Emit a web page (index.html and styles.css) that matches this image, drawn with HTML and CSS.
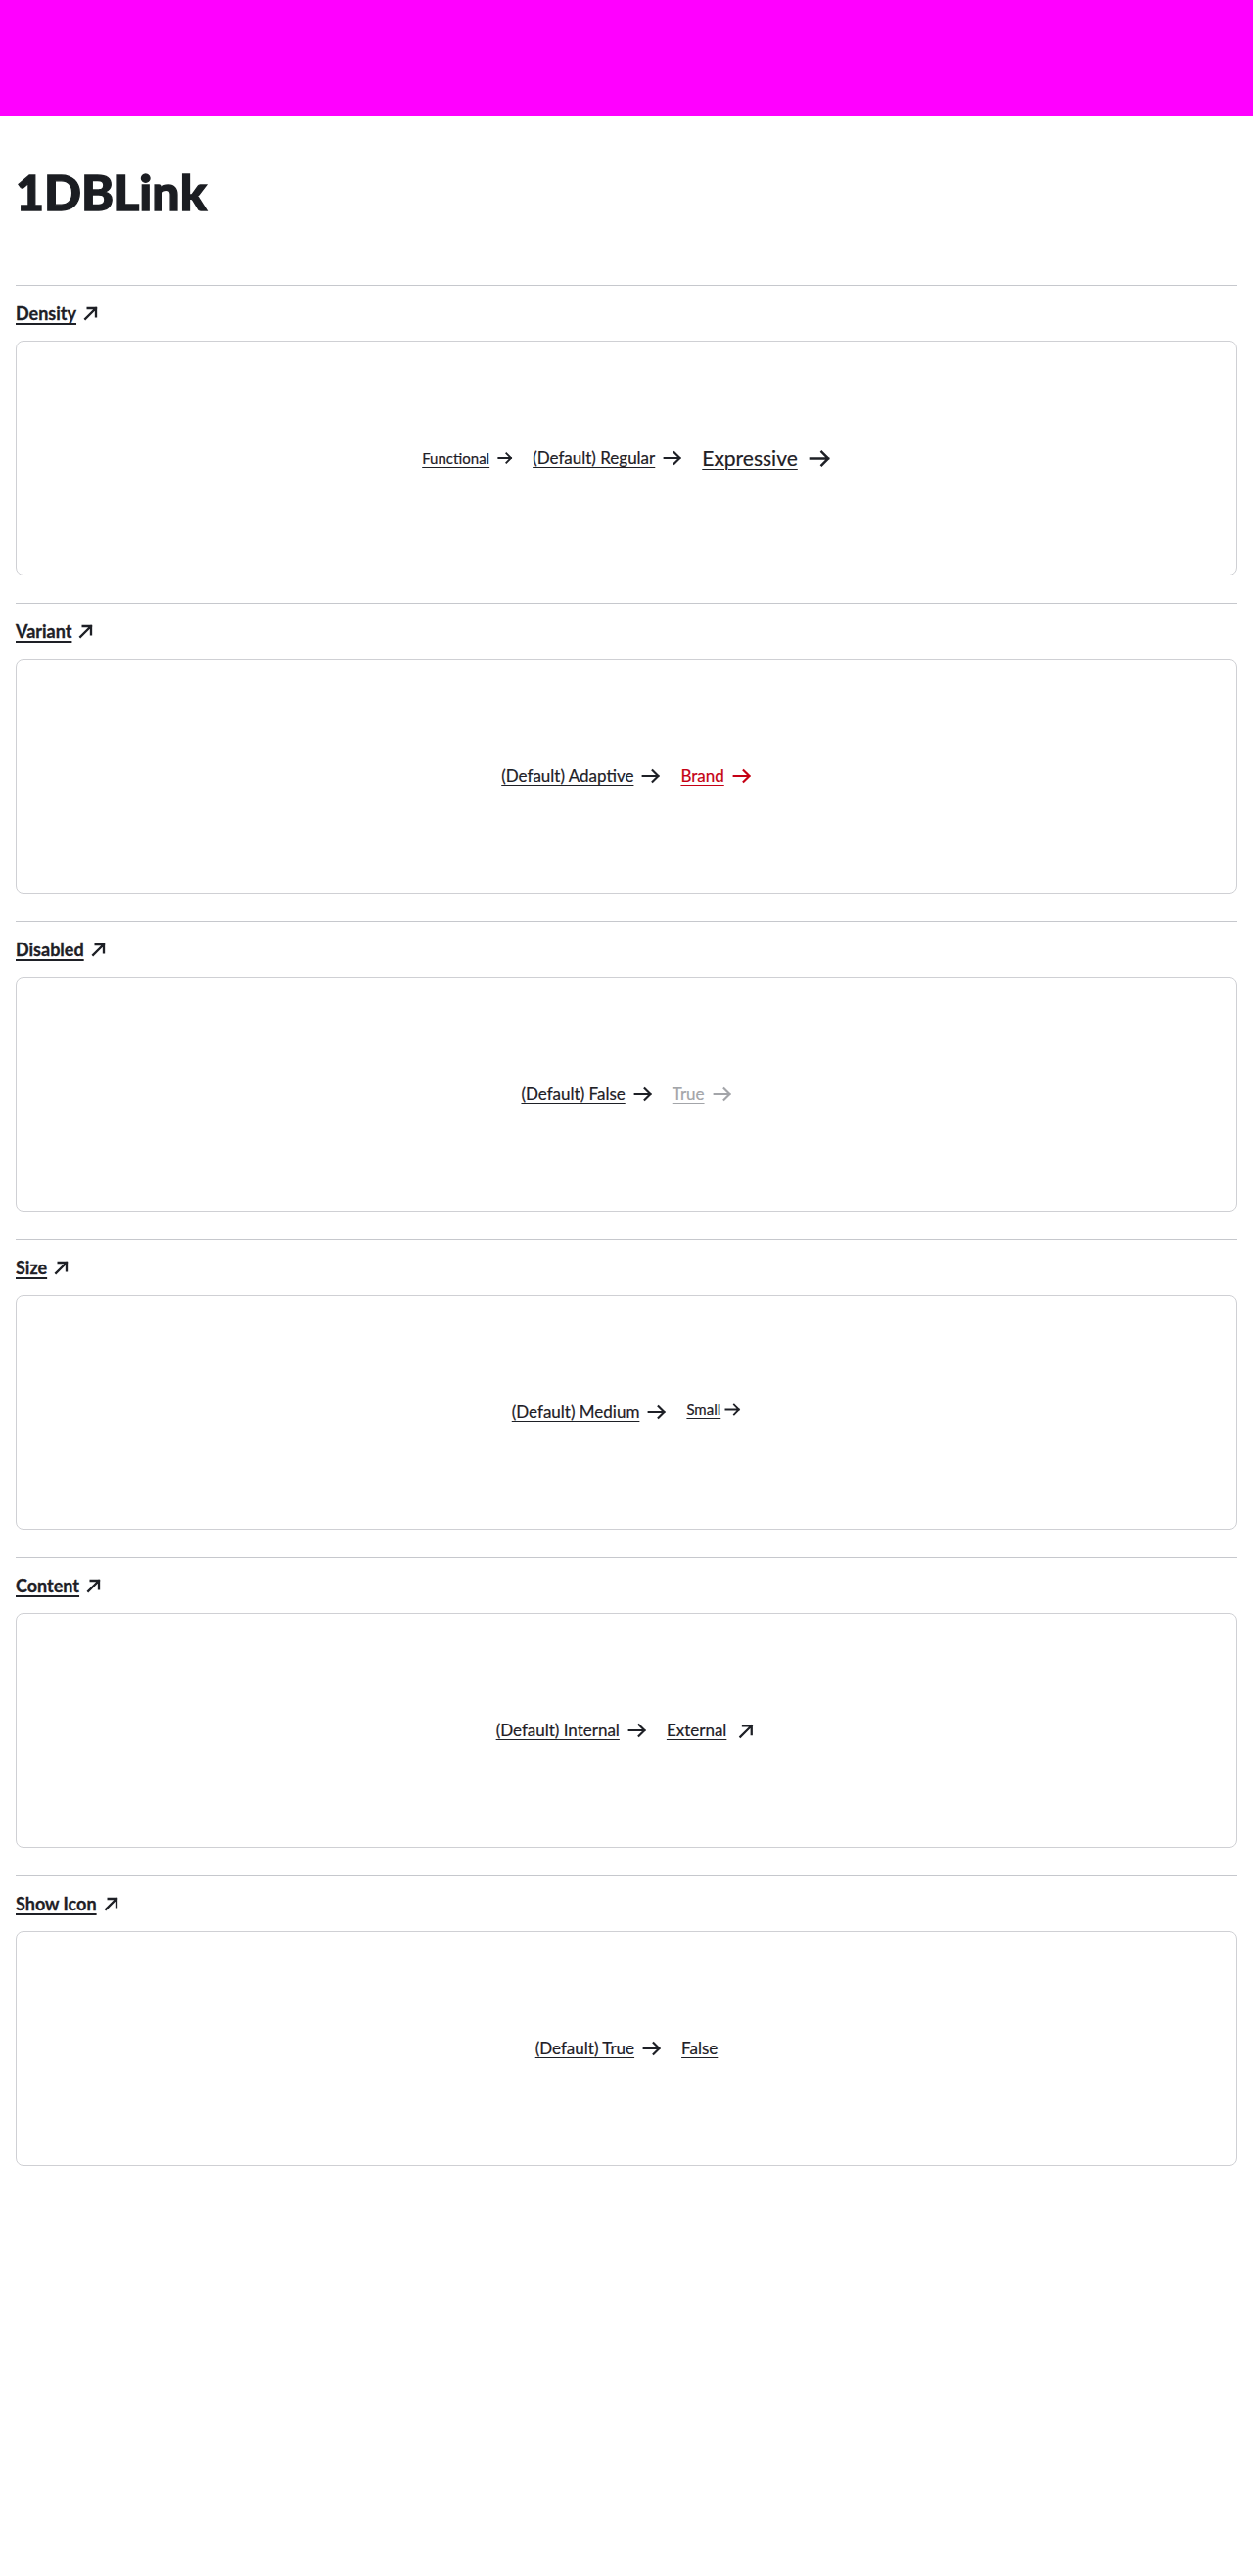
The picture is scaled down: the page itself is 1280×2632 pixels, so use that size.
FILE: index.html
```html
<!DOCTYPE html>
<html lang="en">
<head>
<meta charset="utf-8">
<title>DBLink</title>
<link rel="stylesheet" href="styles.css">
</head>
<body>
<div class="topbar"></div>
<main class="page">
  <h1 class="title">1DBLink</h1>

  <section class="section">
    <h2 class="sec-head"><a class="sec-link" href="#">Density</a><svg class="ico-ext" viewBox="0 0 24 24"><path d="M5 19L18 6M8 6h10v10"/></svg></h2>
    <div class="card">
      <a class="lnk lnk-fn" href="#">Functional<svg class="ico-arr" viewBox="0 0 24 24"><path d="M2 12h19M14 5l7 7-7 7"/></svg></a>
      <a class="lnk" href="#">(Default) Regular<svg class="ico-arr" viewBox="0 0 24 24"><path d="M2 12h19M14 5l7 7-7 7"/></svg></a>
      <a class="lnk lnk-ex" href="#">Expressive<svg class="ico-arr" viewBox="0 0 24 24"><path d="M2 12h19M14 5l7 7-7 7"/></svg></a>
    </div>
  </section>

  <section class="section">
    <h2 class="sec-head"><a class="sec-link" href="#">Variant</a><svg class="ico-ext" viewBox="0 0 24 24"><path d="M5 19L18 6M8 6h10v10"/></svg></h2>
    <div class="card">
      <a class="lnk" href="#">(Default) Adaptive<svg class="ico-arr" viewBox="0 0 24 24"><path d="M2 12h19M14 5l7 7-7 7"/></svg></a>
      <a class="lnk lnk-brand" href="#">Brand<svg class="ico-arr" viewBox="0 0 24 24"><path d="M2 12h19M14 5l7 7-7 7"/></svg></a>
    </div>
  </section>

  <section class="section">
    <h2 class="sec-head"><a class="sec-link" href="#">Disabled</a><svg class="ico-ext" viewBox="0 0 24 24"><path d="M5 19L18 6M8 6h10v10"/></svg></h2>
    <div class="card">
      <a class="lnk" href="#">(Default) False<svg class="ico-arr" viewBox="0 0 24 24"><path d="M2 12h19M14 5l7 7-7 7"/></svg></a>
      <a class="lnk lnk-dis" href="#">True<svg class="ico-arr" viewBox="0 0 24 24"><path d="M2 12h19M14 5l7 7-7 7"/></svg></a>
    </div>
  </section>

  <section class="section">
    <h2 class="sec-head"><a class="sec-link" href="#">Size</a><svg class="ico-ext" viewBox="0 0 24 24"><path d="M5 19L18 6M8 6h10v10"/></svg></h2>
    <div class="card">
      <a class="lnk" href="#">(Default) Medium<svg class="ico-arr" viewBox="0 0 24 24"><path d="M2 12h19M14 5l7 7-7 7"/></svg></a>
      <a class="lnk lnk-sm" href="#">Small<svg class="ico-arr" viewBox="0 0 24 24"><path d="M2 12h19M14 5l7 7-7 7"/></svg></a>
    </div>
  </section>

  <section class="section">
    <h2 class="sec-head"><a class="sec-link" href="#">Content</a><svg class="ico-ext" viewBox="0 0 24 24"><path d="M5 19L18 6M8 6h10v10"/></svg></h2>
    <div class="card">
      <a class="lnk" href="#">(Default) Internal<svg class="ico-arr" viewBox="0 0 24 24"><path d="M2 12h19M14 5l7 7-7 7"/></svg></a>
      <a class="lnk lnk-ext" href="#">External<svg class="ico-arr" viewBox="0 0 24 24"><path d="M5 19L18 6M8 6h10v10"/></svg></a>
    </div>
  </section>

  <section class="section">
    <h2 class="sec-head"><a class="sec-link" href="#">Show Icon</a><svg class="ico-ext" viewBox="0 0 24 24"><path d="M5 19L18 6M8 6h10v10"/></svg></h2>
    <div class="card">
      <a class="lnk" href="#">(Default) True<svg class="ico-arr" viewBox="0 0 24 24"><path d="M2 12h19M14 5l7 7-7 7"/></svg></a>
      <a class="lnk" href="#">False</a>
    </div>
  </section>
</main>
</body>
</html>
```

FILE: styles.css
```css
* { box-sizing: border-box; }
html, body { margin: 0; padding: 0; background: #fff; }
body {
  font-family: Lato, "Noto Sans", "Liberation Sans", sans-serif;
  color: #1e2026;
  min-height: 2632px;
}
.topbar { height: 119px; background: #ff00ff; }
.page { padding: 0 16px; }
.title {
  margin: 47px 0 65px;
  font-family: "Lato Black", "Lato Heavy", Lato, sans-serif;
  font-size: 50px;
  line-height: 60px;
  font-weight: 900;
  color: #1b1d22;
  -webkit-text-stroke: 1.3px #1b1d22;
}
.section {
  border-top: 1px solid #c6c8cd;
  padding-top: 16px;
  margin-bottom: 28px;
}
.sec-head {
  margin: 0 0 16px;
  font-size: 18px;
  line-height: 24px;
  font-weight: 700;
  display: flex;
  align-items: center;
  gap: 5px;
}
.sec-link {
  color: #1e2026;
  text-decoration: underline;
  text-underline-offset: 3px;
  text-decoration-thickness: 1.5px;
  -webkit-text-stroke: 0.3px #1e2026;
}
.ico-ext {
  width: 20px; height: 20px;
  fill: none; stroke: #1e2026; stroke-width: 2.8;
  stroke-linecap: square;
}
.card {
  height: 240px;
  border: 1px solid #cfd0d4;
  border-radius: 8px;
  display: flex;
  align-items: center;
  justify-content: center;
  gap: 20px;
}
.lnk {
  display: inline-flex;
  align-items: center;
  gap: 8px;
  font-size: 17px;
  line-height: 24px;
  color: #1e2026;
  text-decoration: underline;
  text-underline-offset: 3px;
  text-decoration-thickness: 1px;
  -webkit-text-stroke: 0.2px currentColor;
}
.ico-arr {
  width: 20px; height: 20px;
  fill: none; stroke: currentColor; stroke-width: 2.6;
  stroke-linecap: square;
  flex: none;
}
.lnk-fn { font-size: 15px; }
.lnk-fn .ico-arr { width: 16px; height: 16px; stroke-width: 2.8; }
.lnk-ex { font-size: 21px; gap: 11px; }
.lnk-ex .ico-arr { width: 23px; height: 23px; }
.lnk-brand { color: #c50014; }
.lnk-dis { color: #a3a5a9; }
.lnk-sm { font-size: 15px; gap: 4px; margin-top: -6px; }
.lnk-sm .ico-arr { width: 17px; height: 17px; }
.lnk-ext .ico-arr { width: 21px; height: 21px; margin-left: 2px; }
```
